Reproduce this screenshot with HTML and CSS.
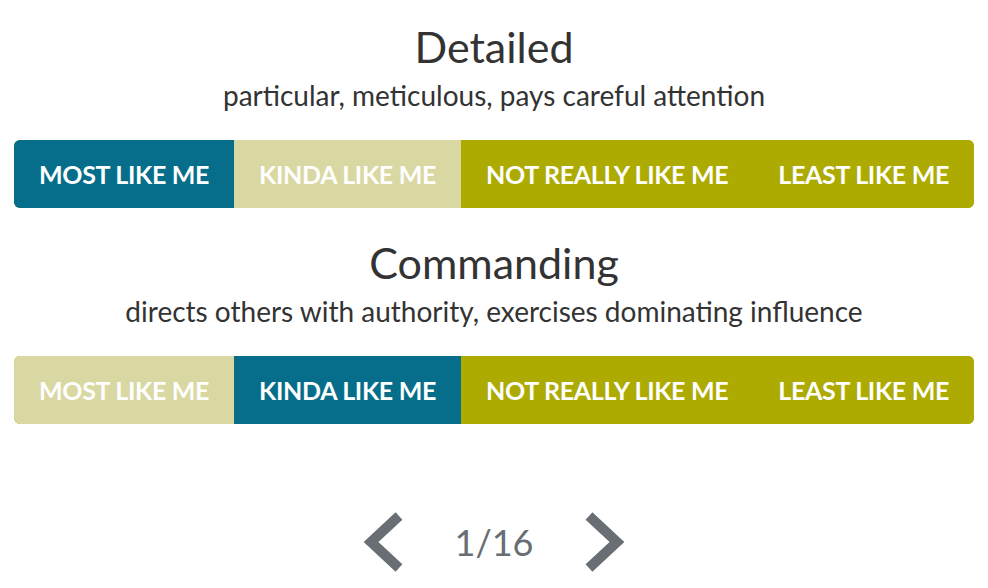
FILE: index.html
```html
<!DOCTYPE html>
<html lang="en">
<head>
<meta charset="utf-8">
<title>Quiz</title>
<link rel="stylesheet" href="styles.css">
</head>
<body>
<main class="quiz">
  <section class="question">
    <h2 class="q-title">Detailed</h2>
    <p class="q-desc">particular, meticulous, pays careful attention</p>
    <div class="scale">
      <button class="opt selected">Most like me</button>
      <button class="opt light">Kinda like me</button>
      <button class="opt">Not really like me</button>
      <button class="opt">Least like me</button>
    </div>
  </section>
  <section class="question">
    <h2 class="q-title">Commanding</h2>
    <p class="q-desc">directs others with authority, exercises dominating influence</p>
    <div class="scale">
      <button class="opt light">Most like me</button>
      <button class="opt selected">Kinda like me</button>
      <button class="opt">Not really like me</button>
      <button class="opt">Least like me</button>
    </div>
  </section>
  <nav class="pager">
    <button class="arrow" aria-label="Previous">
      <svg width="44" height="60" viewBox="0 0 44 60"><polyline points="38,4 10,30 38,56" fill="none" stroke="currentColor" stroke-width="10" stroke-linejoin="miter"/></svg>
    </button>
    <span class="count">1/16</span>
    <button class="arrow" aria-label="Next">
      <svg width="44" height="60" viewBox="0 0 44 60"><polyline points="6,4 34,30 6,56" fill="none" stroke="currentColor" stroke-width="10" stroke-linejoin="miter"/></svg>
    </button>
  </nav>
</main>
</body>
</html>
```
FILE: styles.css
```css
* { box-sizing: border-box; }
html, body { margin: 0; padding: 0; background: #fff; }
body { font-family: Lato, "Open Sans", sans-serif; color: #333; }
.quiz { padding: 0 14px; }
.question { text-align: center; padding-top: 22px; padding-bottom: 8px; }
.q-title { margin: 0; font-size: 43px; line-height: 50px; font-weight: 400; color: #333; }
.q-desc { margin: 8px 0 30px; font-size: 28px; line-height: 30px; color: #333; }
.scale { display: flex; height: 68px; border-radius: 6px; overflow: hidden; background: #adab02; }
.opt {
  flex: 1 1 auto;
  border: 0; margin: 0; padding: 0 24px;
  background: #adab02; color: #fff;
  font-family: inherit; font-size: 25px; font-weight: 700;
  text-transform: uppercase; letter-spacing: -0.3px;
  display: flex; align-items: center; justify-content: center;
}
.opt.light { background: #d9d8a2; }
.opt.selected { background: #066e8a; }
.pager { display: flex; justify-content: center; align-items: center; gap: 50px; margin-top: 80px; color: #686e73; }
.arrow { border: 0; background: none; padding: 0; color: #686e73; display: flex; }
.count { font-size: 36px; line-height: 60px; color: #686e73; }
```
